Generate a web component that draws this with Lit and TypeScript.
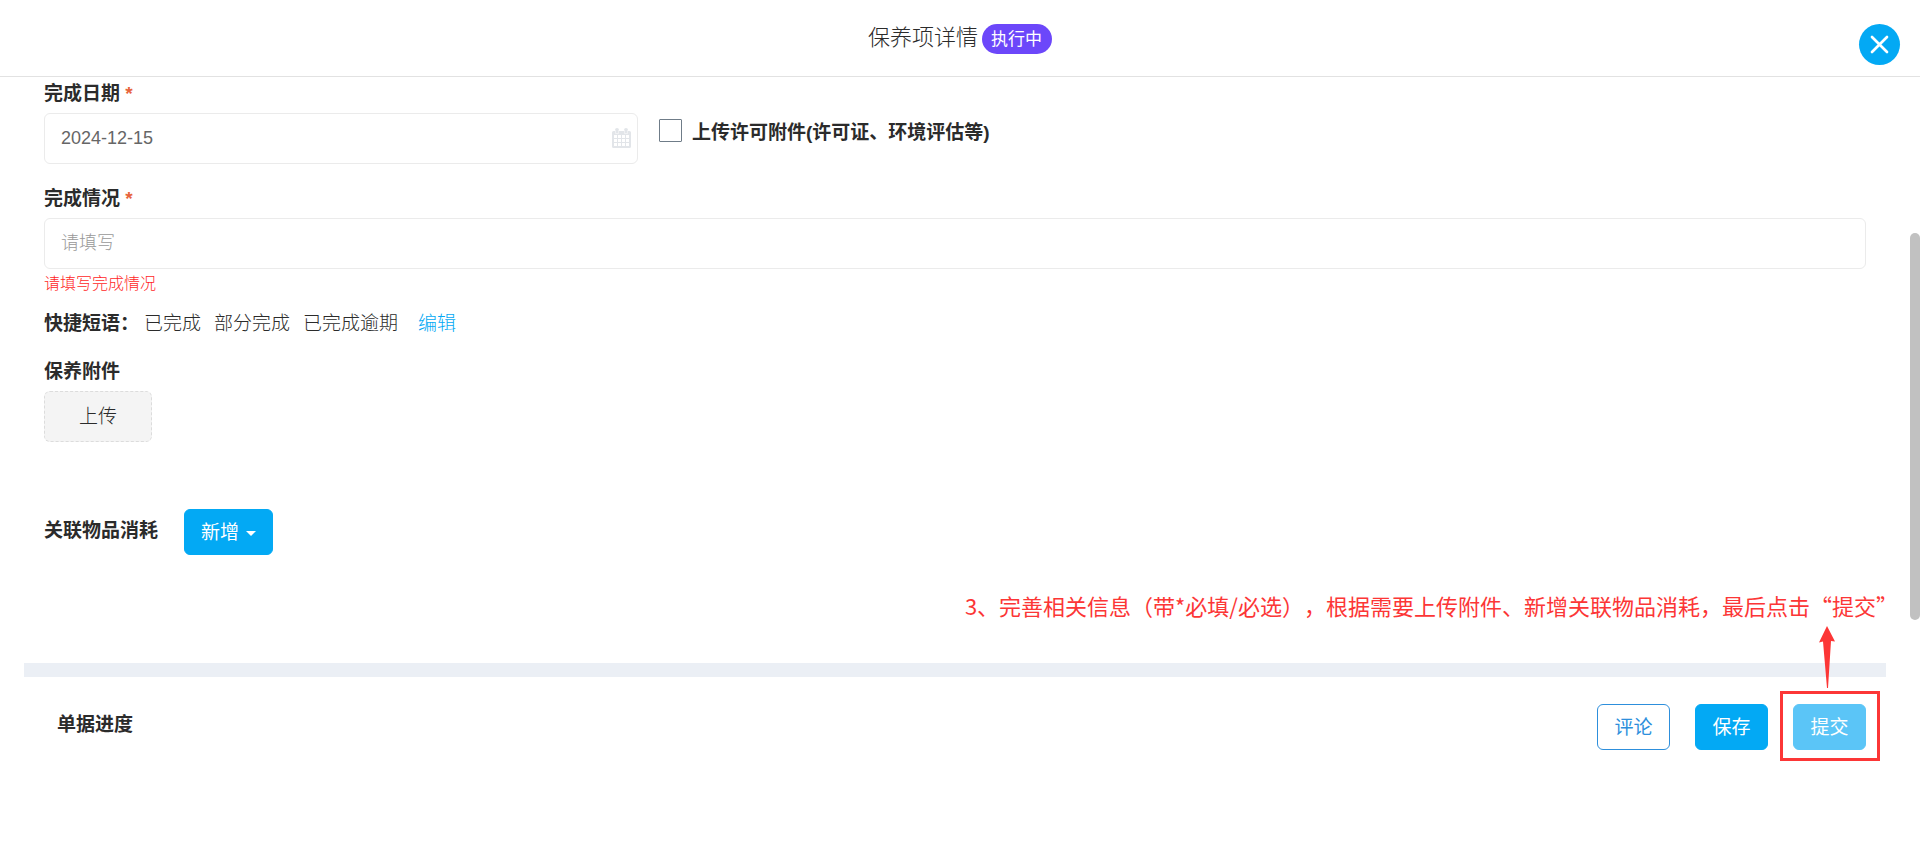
import { LitElement, html, css, svg } from "lit";
import { customElement, state } from "lit/decorators.js";

const PHRASES = ["已完成", "部分完成", "已完成逾期"];

const calendarCells = [0, 1, 2].flatMap((row) =>
  [0, 1, 2, 3].map((col) => svg`<rect x=${2 + col * 4} y=${7 + row * 4} width="3" height="3" fill="#fff"></rect>`)
);

@customElement("app-root")
export class AppRoot extends LitElement {
  static styles = css`
    :host {
      display: block;
      min-height: 100vh;
      background: #fff;
      color: #2b2b2b;
      font-family: "Liberation Sans", "Noto Sans CJK SC", sans-serif;
      font-size: 19px;
      line-height: 28px;
      font-weight: 300;
    }
    * {
      box-sizing: border-box;
    }
    button,
    input {
      font: inherit;
      margin: 0;
    }
    .page {
      display: flex;
      flex-direction: column;
      min-height: 100vh;
    }
    header {
      display: grid;
      grid-template-columns: 1fr auto 1fr;
      border-bottom: 1px solid #e2e2e2;
      height: 77px;
      padding: 24px 20px 0;
    }
    .heading {
      grid-column: 2;
      display: flex;
      gap: 4px;
      align-items: flex-start;
    }
    h1 {
      margin: 0;
      font-size: 22px;
      line-height: 28px;
      font-weight: 300;
    }
    .badge {
      background: #6c47fa;
      color: #fff;
      border-radius: 15px;
      padding: 1px 10px 0 9px;
      font-size: 17px;
      line-height: 29px;
      font-weight: 400;
    }
    .close {
      justify-self: end;
      width: 41px;
      height: 41px;
      border: 0;
      border-radius: 50%;
      background: #03a9f4;
      padding: 0;
      display: grid;
      place-items: center;
    }
    .body {
      position: relative;
      flex: 1;
      padding: 3px 34px 0 24px;
    }
    .scrollbar {
      position: absolute;
      right: 0;
      top: 19.7%;
      width: 10px;
      height: 49%;
      border-radius: 5px;
      background: #c1c1c1;
    }
    .form {
      padding: 0 20px 108px;
    }
    .row {
      display: grid;
      grid-template-columns: repeat(3, 1fr);
      column-gap: 20px;
      margin-bottom: 21px;
    }
    .label,
    h2 {
      display: block;
      margin: 0 0 5px;
      font-size: 19px;
      line-height: 28px;
      font-weight: 700;
    }
    .required {
      color: #e7643c;
      font-weight: 700;
    }
    .control {
      display: flex;
      align-items: center;
      height: 51px;
      border: 1px solid #ebebeb;
      border-radius: 6px;
      padding: 0 6px 2px 16px;
    }
    .control input {
      flex: 1;
      min-width: 0;
      border: 0;
      outline: 0;
      padding: 0;
      background: none;
      color: #666;
      font-size: 18px;
      font-weight: 400;
    }
    .control input::placeholder {
      color: #999;
      font-weight: 300;
    }
    .check {
      display: flex;
      align-items: flex-start;
      gap: 10px;
      padding: 39px 0 0 1px;
      font-weight: 700;
      white-space: nowrap;
    }
    .check input {
      appearance: none;
      width: 23px;
      height: 23px;
      border: 1px solid #6f7c88;
      border-radius: 1px;
      background: #fff;
    }
    .check input:checked {
      background: #03a9f4;
    }
    .error {
      margin: 3px 0 14px;
      color: #ff1f1f;
      font-size: 16px;
      line-height: 24px;
    }
    .phrases {
      display: flex;
      gap: 13px;
      margin-bottom: 20px;
    }
    .phrases strong {
      font-weight: 700;
      margin-right: -8px;
    }
    .phrase {
      border: 0;
      background: none;
      padding: 0;
      color: inherit;
    }
    a {
      color: #03a9f4;
      text-decoration: none;
      margin-left: 7px;
    }
    .upload {
      display: block;
      width: 108px;
      height: 51px;
      border: 1px dashed #dcdcdc;
      border-radius: 6px;
      background: #f4f4f4;
      color: inherit;
      padding: 0;
    }
    .items {
      display: flex;
      align-items: flex-start;
      gap: 26px;
      margin-top: 67px;
    }
    .items h2 {
      margin: 8px 0 0;
    }
    .btn {
      min-width: 73px;
      height: 46px;
      border: 1px solid #03a9f4;
      border-radius: 6px;
      background: #03a9f4;
      color: #fff;
      padding: 1px 16px 0;
      font-weight: 400;
      white-space: nowrap;
    }
    .add {
      display: flex;
      align-items: center;
      gap: 7px;
    }
    .caret {
      border: 5px solid transparent;
      border-top-color: #fff;
      border-bottom: 0;
      margin-top: 2px;
    }
    .outline {
      background: #fff;
      color: #2d8fdc;
      border-color: #2d8fdc;
    }
    .muted {
      background: #5bc5f7;
      border-color: #5bc5f7;
    }
    .divider {
      height: 14px;
      background: #ebeff5;
    }
    .footer {
      display: flex;
      justify-content: space-between;
      align-items: flex-start;
      padding: 27px 20px 0 33px;
    }
    .footer h2 {
      margin: 7px 0 0;
    }
    .actions {
      display: flex;
      gap: 25px;
    }
    .target {
      position: relative;
    }
    .frame {
      position: absolute;
      inset: -13px -14px -11px -13px;
      border: 3px solid #fc3636;
      pointer-events: none;
    }
    .arrow {
      position: absolute;
      left: 26px;
      bottom: 62px;
    }
    .note {
      position: absolute;
      right: -32px;
      bottom: 129px;
      margin: 0;
      color: #fc3636;
      font-family: "Noto Sans CJK SC", sans-serif;
      font-size: 22px;
      line-height: 32px;
      font-weight: 400;
      white-space: nowrap;
      text-spacing-trim: space-all;
    }
  `;

  @state() private date = "2024-12-15";
  @state() private result = "";

  render() {
    return html`
      <div class="page">
        <header>
          <div class="heading">
            <h1>保养项详情</h1>
            <span class="badge">执行中</span>
          </div>
          <button class="close" type="button" aria-label="关闭">
            <svg width="19" height="19" viewBox="0 0 19 19" fill="none" stroke="#fff" stroke-width="2.7" stroke-linecap="round">
              <path d="M2 2L17 17M17 2L2 17"></path>
            </svg>
          </button>
        </header>

        <main class="body">
          <section class="form">
            <div class="row">
              <div>
                <label class="label" for="date">完成日期 <span class="required">*</span></label>
                <div class="control">
                  <input id="date" type="text" .value=${this.date} />
                  <svg width="19" height="20" viewBox="0 0 19 20">
                    <path
                      fill="#e2e5e9"
                      d="M1.5 3H3V2a2 2 0 0 1 4 0v1h5V2a2 2 0 0 1 4 0v1h1.5A1.5 1.5 0 0 1 19 4.500V18.500A1.500 1.500 0 0 1 17.500 20H1.500A1.500 1.500 0 0 1 0 18.500V4.500A1.500 1.500 0 0 1 1.500 3z"
                    ></path>
                    <path stroke="#fff" stroke-width="0.8" d="M3.500 2v3.500h3V2M12.500 2v3.500h3V2" fill="none" opacity="0.6"></path>
                    ${calendarCells}
                  </svg>
                </div>
              </div>
              <label class="check">
                <input type="checkbox" />
                <span>上传许可附件(许可证、环境评估等)</span>
              </label>
            </div>

            <label class="label" for="result">完成情况 <span class="required">*</span></label>
            <div class="control">
              <input
                id="result"
                type="text"
                placeholder="请填写"
                .value=${this.result}
                @input=${(e: Event) => (this.result = (e.target as HTMLInputElement).value)}
              />
            </div>
            <p class="error">请填写完成情况</p>

            <div class="phrases">
              <strong>快捷短语：</strong>
              ${PHRASES.map(
                (text) => html`<button class="phrase" type="button" @click=${() => (this.result = text)}>${text}</button>`
              )}
              <a href="#">编辑</a>
            </div>

            <h2>保养附件</h2>
            <button class="upload" type="button">上传</button>

            <div class="items">
              <h2>关联物品消耗</h2>
              <button class="btn add" type="button">新增<span class="caret"></span></button>
            </div>
          </section>

          <div class="divider"></div>

          <section class="footer">
            <h2>单据进度</h2>
            <div class="actions">
              <button class="btn outline" type="button">评论</button>
              <button class="btn" type="button">保存</button>
              <div class="target">
                <button class="btn muted" type="button">提交</button>
                <div class="frame"></div>
                <svg class="arrow" width="16" height="62" viewBox="0 0 16 62" fill="#fc3636">
                  <path d="M8 0L16 15.500L12 15L9 62H8L4 15.500L0 16.500Z"></path>
                </svg>
                <p class="note">3、完善相关信息（带*必填/必选），根据需要上传附件、新增关联物品消耗，最后点击“提交”</p>
              </div>
            </div>
          </section>
          <div class="scrollbar"></div>
        </main>
      </div>
    `;
  }
}
